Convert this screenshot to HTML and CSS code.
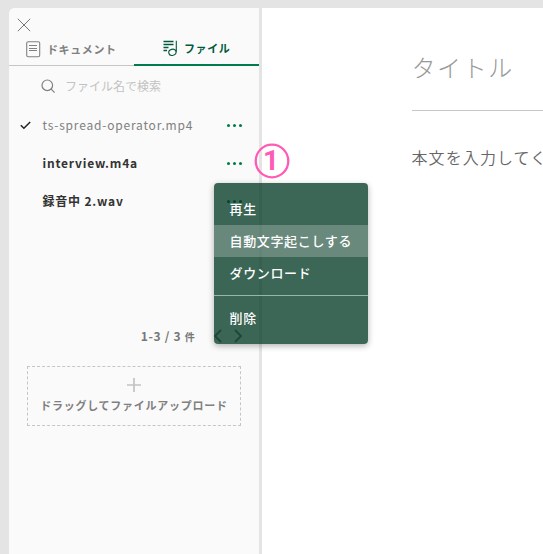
FILE: index.html
```html
<!DOCTYPE html>
<html lang="ja">
<head>
<meta charset="utf-8">
<title>ファイル</title>
<link rel="stylesheet" href="styles.css">
</head>
<body>
<div class="app">
  <aside class="sidebar">
    <button class="close" aria-label="閉じる"><svg width="14" height="14" viewBox="0 0 14 14"><path d="M.8.8l12.4 12.4M13.2.8L.8 13.2"/></svg></button>
    <nav class="tabs">
      <a class="tab">
        <svg width="15" height="17" viewBox="0 0 15 17"><rect x=".7" y=".7" width="13" height="15" rx="1.5"/><path d="M3 4.5h8M3 7.5h8M3 9.5h8"/></svg>
        <span>ドキュメント</span>
      </a>
      <a class="tab active">
        <svg width="15" height="17" viewBox="0 0 15 17"><path class="lines" d="M.5 1.5h10M.5 4.5h10M.5 7.5h5M.5 10.5h3.5"/><ellipse cx="9.4" cy="12.3" rx="3.7" ry="3" transform="rotate(-15 9.4 12.3)"/><path d="M13.3.8v11"/></svg>
        <span>ファイル</span>
      </a>
    </nav>
    <div class="search">
      <svg width="15" height="15" viewBox="0 0 15 15"><circle cx="6.3" cy="6.3" r="5.3"/><path d="M10.2 10.2l3.4 3.4"/></svg>
      <span>ファイル名で検索</span>
    </div>
    <ul class="files">
      <li class="current"><svg class="check" width="11" height="9" viewBox="0 0 11 9"><path d="M.8 4.2l3.1 3.1L10.2 1"/></svg><span>ts-spread-operator.mp4</span><i class="more"><b></b><b></b><b></b></i></li>
      <li><span>interview.m4a</span><i class="more"><b></b><b></b><b></b></i></li>
      <li><span>録音中 2.wav</span><i class="more"><b></b><b></b><b></b></i></li>
    </ul>
    <div class="pager">
      <span>1-3 / 3 <small>件</small></span>
      <svg width="30" height="14" viewBox="0 0 30 14"><path d="M8 1L2 7l6 6M22 1l6 6-6 6"/></svg>
    </div>
    <div class="upload">
      <svg width="14" height="14" viewBox="0 0 14 14"><path d="M7 0v14M0 7h14"/></svg>
      <span>ドラッグしてファイルアップロード</span>
    </div>
  </aside>
  <main class="editor">
    <div class="title">タイトル</div>
    <div class="body">本文を入力してく</div>
  </main>
</div>
<div class="marker"><svg width="36" height="36" viewBox="0 0 36 36"><circle cx="18" cy="18" r="16.3"/></svg><span>1</span></div>
<div class="menu">
  <div class="item">再生</div>
  <div class="item hover">自動文字起こしする</div>
  <div class="item">ダウンロード</div>
  <hr>
  <div class="item">削除</div>
</div>
</body>
</html>
```
FILE: styles.css
```css
* { box-sizing: border-box; }
body {
  margin: 0;
  height: 554px;
  padding: 8px 0 0 9px;
  overflow: hidden;
  position: relative;
  background: #e4e4e4;
  font-family: "Noto Sans CJK JP", sans-serif;
  color: #333;
}
svg { fill: none; stroke: currentColor; flex: none; display: block; }
.app { display: flex; height: 546px; border-radius: 6px 0 0 0; overflow: hidden; background: #fff; }
.sidebar { width: 253px; flex: none; background: #fafafa; border-right: 3px solid #e4e4e4; }
.close { display: block; border: 0; background: none; padding: 9px 0 0 7.5px; height: 24px; color: #777; }
.tabs { display: flex; height: 34px; }
.tab {
  display: flex; align-items: center; width: 125px; padding: 1px 0 0 17px; gap: 6px;
  border-bottom: 1px solid #c6c6c6;
  font-size: 11px; font-weight: 700; letter-spacing: .6px; color: #808080;
  white-space: nowrap;
}
.tab svg { stroke-width: 1.1; }
.tab span { position: relative; top: -.5px; }
.tab.active { color: #00593a; border-bottom: 2px solid #007c4a; padding: 1px 0 0 29px; }
.tab .lines { stroke-width: 1.4; }
.search { display: flex; align-items: center; gap: 9px; height: 40px; padding-left: 32px; font-size: 12px; color: #c2c2c2; }
.search span { margin-top: -2px; }
.search svg { color: #808080; stroke-width: 1.2; }
.files { list-style: none; margin: 0; padding: 0; }
.files li {
  position: relative; display: flex; align-items: center; justify-content: space-between;
  height: 38px; padding: 0 17.5px 0 33.5px;
  font-size: 12px; font-weight: 700; letter-spacing: .8px;
}
.files span { margin-top: -2px; }
.files .current { font-weight: 400; color: #808080; }
.check { position: absolute; left: 11px; top: 15px; color: #222; stroke-width: 1.5; }
.more { display: flex; gap: 3px; }
.more b { width: 3px; height: 3px; border-radius: 50%; background: #007c4a; }
.pager {
  display: flex; align-items: center; justify-content: flex-end; gap: 17px;
  height: 24px; margin-top: 104px; padding-right: 16.5px;
  font-size: 12px; font-weight: 700; letter-spacing: .7px; color: #777;
}
.pager span { margin-top: -2px; }
.pager small { font-size: 10px; }
.pager svg { stroke-width: 1.8; }
.upload {
  display: flex; flex-direction: column; align-items: center;
  width: 214px; height: 60px; margin: 18px 0 0 18px; padding-top: 11px;
  border: 1px dashed #c6c6c6;
  font-size: 11px; line-height: 16px; font-weight: 700; letter-spacing: .75px; color: #808080;
}
.upload span { margin-top: 5px; white-space: nowrap; }
.upload svg { color: #c2c2c2; stroke-width: 1.7; }
.editor { flex: 1; min-width: 0; overflow: hidden; padding: 34px 0 0 150px; white-space: nowrap; }
.title { height: 69px; border-bottom: 1px solid #c6c6c6; font-size: 24px; line-height: 50px; font-weight: 300; letter-spacing: 1.6px; text-indent: -.5px; color: #999; }
.body { margin-top: 34px; font-size: 16px; line-height: 24px; letter-spacing: 1.1px; text-indent: -.5px; font-weight: 350; color: #666; }
.marker { position: absolute; left: 254px; top: 143px; width: 36px; height: 36px; color: #ff5ab5; }
.marker svg { stroke-width: 2.3; }
.marker span { position: absolute; inset: 0 2px 0 0; font: 700 28px/36px Roboto, sans-serif; text-align: center; }
.menu {
  position: absolute; left: 214px; top: 183px; width: 154px; height: 161px; padding-top: 10px;
  border-radius: 4px; overflow: hidden;
  background: rgba(0, 55, 34, .765);
  box-shadow: 0 2px 6px rgba(0, 0, 0, .3);
  color: #fff; font-size: 13px; font-weight: 500; letter-spacing: .65px;
}
.item { height: 32px; line-height: 32px; padding-left: 15.5px; }
.item.hover { background: rgba(255, 255, 255, .23); }
.menu hr { margin: 6px 0; border: 0; height: 1px; background: #9bb3aa; }
```
